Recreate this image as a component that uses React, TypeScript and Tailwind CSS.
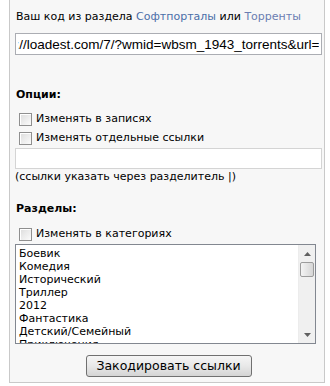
import { useEffect, useRef } from "react"

const categories = [
  "Боевик",
  "Комедия",
  "Исторический",
  "Триллер",
  "2012",
  "Фантастика",
  "Детский/Семейный",
  "Приключения",
  "Мелодрама",
  "Драма",
  "Ужасы",
  "Мультфильмы",
  "Документальный",
  "Военный",
  "Аниме",
  "Вестерн",
  "Криминал",
  "Мистика",
  "Сериалы",
  "Музыка",
]

function Checkbox() {
  return (
    <span className="inline-block w-[13px] h-[13px] border border-[#8f8f8f] bg-gradient-to-br from-[#dcdcdc] to-[#fbfbfb] shadow-[inset_1px_1px_0_#ffffff]" />
  )
}

function CheckRow({ label }: { label: string }) {
  return (
    <label className="flex items-center h-[19px] pl-[4px] gap-[4px]">
      <Checkbox />
      <span>{label}</span>
    </label>
  )
}

export default function App() {
  const codeRef = useRef<HTMLInputElement>(null)

  useEffect(() => {
    if (codeRef.current) codeRef.current.scrollLeft = codeRef.current.scrollWidth
  }, [])

  return (
    <div className="w-[330px] h-[386px] bg-white overflow-hidden font-['DejaVu_Sans',Verdana,sans-serif] text-[11px] text-black">
      <div className="ml-[9px] w-[316px] border-x border-b border-[#c9c9c9] bg-[#f7f7f7] pl-[5px] pr-[2px] pt-[9px] pb-[5px]">
        <p className="h-[16px] leading-[16px] pl-[1px]">
          Ваш код из раздела <span className="text-[#4a6ea8]">Софтпорталы</span> или{" "}
          <span className="text-[#6a7db2]">Торренты</span>
        </p>
        <input
          ref={codeRef}
          readOnly
          value="http://loadest.com/7/?wmid=wbsm_1943_torrents&url="
          className="mt-[8px] block w-[307px] h-[22px] border border-[#abadb3] bg-white px-[2px] font-['Liberation_Sans',Arial,sans-serif] text-[13.5px] outline-none"
        />

        <p className="mt-[32px] h-[16px] leading-[16px] font-bold pl-[1px]">Опции:</p>
        <div className="mt-[7px]">
          <CheckRow label="Изменять в записях" />
          <CheckRow label="Изменять отдельные ссылки" />
        </div>
        <input className="block w-[307px] h-[21px] border border-[#d4d4d4] bg-white outline-none" />
        <p className="h-[16px] leading-[16px]">(ссылки указать через разделитель |)</p>

        <p className="mt-[16px] h-[16px] leading-[16px] font-bold pl-[1px]">Разделы:</p>
        <div className="mt-[8px]">
          <CheckRow label="Изменять в категориях" />
        </div>
        <div className="flex w-[301px] h-[100px] border border-[#828790] bg-white">
          <ul className="flex-1 overflow-hidden pt-[2px] pl-[3px]">
            {categories.map((c) => (
              <li key={c} className="h-[13px] leading-[13px] whitespace-nowrap">
                {c}
              </li>
            ))}
          </ul>
          <div className="w-[17px] flex flex-col bg-[#f0f0f0] border-l border-[#ececec]">
            <div className="h-[17px] flex items-center justify-center">
              <svg width="7" height="4" viewBox="0 0 7 4">
                <path d="M3.5 0 L7 4 L0 4 Z" fill="#606060" />
              </svg>
            </div>
            <div className="mx-[1px] h-[15px] rounded-[2px] border border-[#9c9c9c] bg-gradient-to-r from-[#f4f4f4] to-[#d6d6d6]" />
            <div className="flex-1" />
            <div className="h-[17px] flex items-center justify-center">
              <svg width="7" height="4" viewBox="0 0 7 4">
                <path d="M0 0 L7 0 L3.5 4 Z" fill="#606060" />
              </svg>
            </div>
          </div>
        </div>

        <div className="mt-[11px] flex justify-center">
          <button className="w-[166px] h-[22px] rounded-[3px] border border-[#707070] bg-gradient-to-b from-[#f6f6f6] via-[#e8e8e8] to-[#d4d4d4] text-[12.5px] leading-[20px]">
            Закодировать ссылки
          </button>
        </div>
      </div>
    </div>
  )
}
